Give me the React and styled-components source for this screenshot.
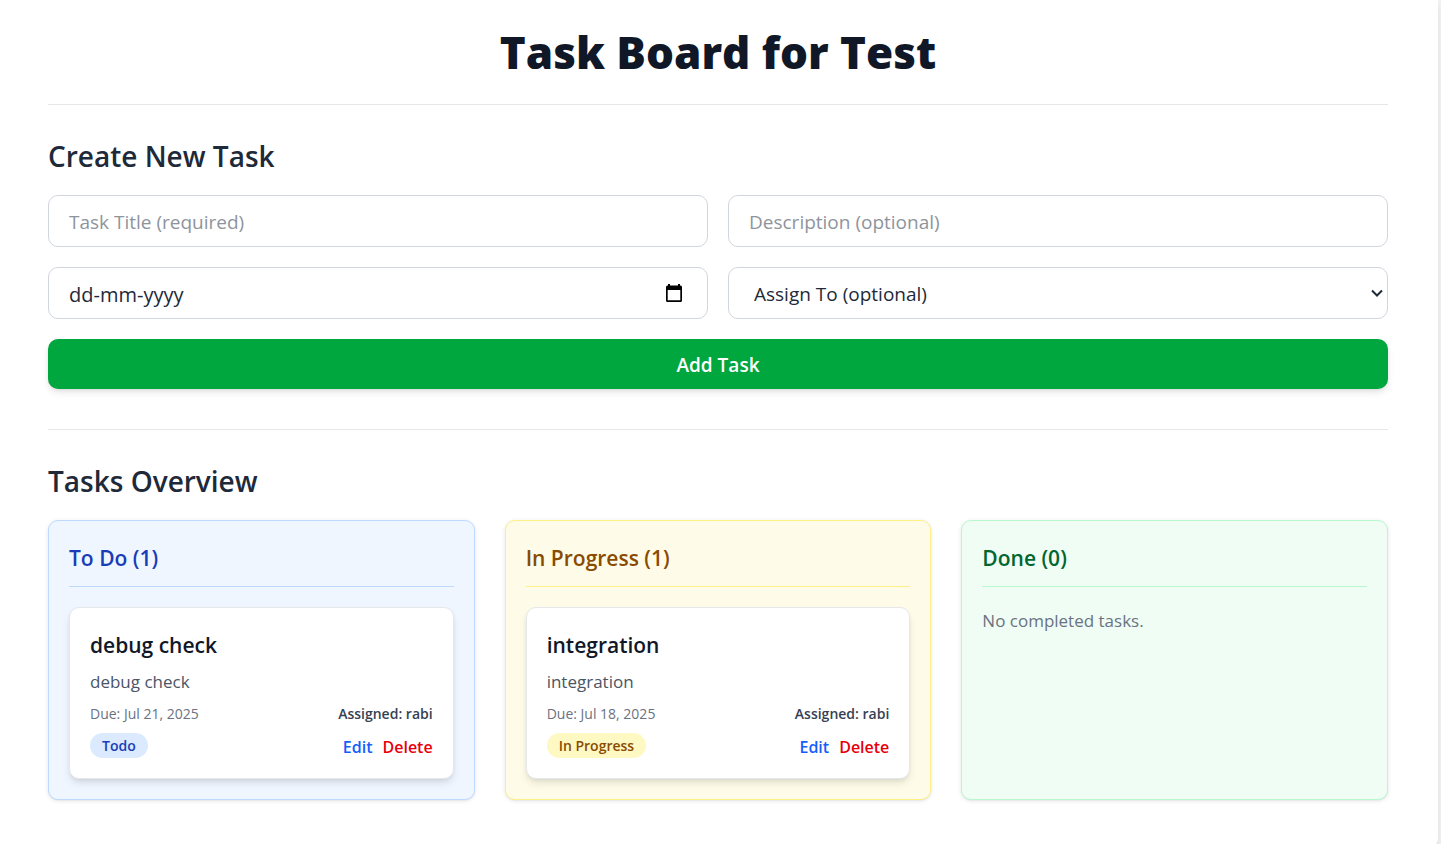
import React from "react";
import styled, { createGlobalStyle } from "styled-components";

const GlobalStyle = createGlobalStyle`
  *, *::before, *::after { box-sizing: border-box; }
  html, body { margin: 0; padding: 0; background: #f3f4f6; }
  body {
    font-family: "Open Sans", "Noto Sans", sans-serif;
    font-size: 19px;
    color: #1e2939;
  }
  h1, h2, h3, h4, p { margin: 0; }
  button, input, select { font: inherit; color: inherit; }
`;

const tones = {
  blue: { bg: "#eff6ff", line: "#bedbff", text: "#193cb8", badge: "#dbeafe" },
  yellow: { bg: "#fefce8", line: "#fff085", text: "#894b00", badge: "#fef9c2" },
  green: { bg: "#f0fdf4", line: "#b9f8cf", text: "#016630", badge: "#dcfce7" },
};

const Page = styled.div`
  height: 100vh;
  overflow: hidden;
`;

const Panel = styled.main`
  margin-right: 3px;
  padding: 27px 50px 48px 48px;
  background: #ffffff;
  border-radius: 0 0 10px 0;
  box-shadow: 0 4px 8px rgba(0, 0, 0, 0.1);
`;

const Header = styled.header`
  padding-bottom: 27px;
  border-bottom: 1px solid #e5e7eb;
  text-align: center;
`;

const Title = styled.h1`
  font-size: 44px;
  line-height: 50px;
  font-weight: 800;
  color: #101828;
`;

const Section = styled.section`
  padding-top: 32px;
`;

const SectionTitle = styled.h2`
  margin-bottom: 20px;
  font-size: 28px;
  line-height: 38px;
  font-weight: 600;
`;

const TaskForm = styled.form`
  display: grid;
  grid-template-columns: 1fr 1fr;
  gap: 20px;
  padding-bottom: 40px;
  border-bottom: 1px solid #e5e7eb;
`;

const Field = styled.div`
  display: flex;
  align-items: center;
  height: 52px;
  padding-right: ${(p) => p.$end || 20}px;
  border: 1px solid #d1d5dc;
  border-radius: 10px;
  background: #ffffff;
`;

const Input = styled.input`
  flex: 1;
  min-width: 0;
  height: 100%;
  padding: 2px 0 0 20px;
  border: 0;
  outline: 0;
  background: transparent;
  font-size: ${(p) => (p.$date ? 20 : 19)}px;
  &::placeholder {
    color: ${(p) => (p.$date ? "#1e2939" : "#8e949c")};
    opacity: 1;
  }
`;

const Select = styled.select`
  flex: 1;
  min-width: 0;
  height: 100%;
  padding: 2px 0 0 25px;
  border: 0;
  outline: 0;
  appearance: none;
  background: transparent;
`;

const IconButton = styled.button`
  display: flex;
  padding: 0;
  margin-right: 5px;
  border: 0;
  background: transparent;
  color: #000000;
  cursor: pointer;
`;

const SubmitButton = styled.button`
  grid-column: 1 / -1;
  height: 50px;
  padding: 2px 0 0;
  border: 0;
  border-radius: 10px;
  background: #00a63e;
  color: #ffffff;
  font-weight: 600;
  cursor: pointer;
  box-shadow: 0 4px 8px -1px rgba(0, 0, 0, 0.1), 0 2px 5px -2px rgba(0, 0, 0, 0.1);
`;

const Board = styled.div`
  display: grid;
  grid-template-columns: repeat(3, 1fr);
  gap: 30px;
`;

const Column = styled.section`
  padding: 20px;
  border: 1px solid ${(p) => tones[p.$tone].line};
  border-radius: 10px;
  background: ${(p) => tones[p.$tone].bg};
  box-shadow: 0 1px 4px rgba(0, 0, 0, 0.1), 0 1px 2px -1px rgba(0, 0, 0, 0.1);
`;

const ColumnTitle = styled.h3`
  margin-bottom: 20px;
  padding-bottom: 10px;
  border-bottom: 1px solid ${(p) => tones[p.$tone].line};
  font-size: 21px;
  line-height: 35px;
  font-weight: 600;
  color: ${(p) => tones[p.$tone].text};
`;

const Empty = styled.p`
  font-size: 17px;
  line-height: 28px;
  color: #6a7282;
`;

const Card = styled.article`
  display: flex;
  flex-direction: column;
  gap: 5px;
  padding: 20px;
  border: 1px solid #e5e7eb;
  border-radius: 10px;
  background: #ffffff;
  box-shadow: 0 5px 8px -1px rgba(0, 0, 0, 0.1), 0 2px 5px -2px rgba(0, 0, 0, 0.1);
`;

const CardTitle = styled.h4`
  font-size: 21px;
  line-height: 35px;
  font-weight: 600;
  color: #101828;
`;

const Description = styled.p`
  font-size: 17px;
  line-height: 28px;
  color: #4a5565;
`;

const Meta = styled.div`
  display: flex;
  justify-content: space-between;
  font-size: 14px;
  line-height: 25px;
  color: #6a7282;
`;

const Assignee = styled.span`
  font-weight: 600;
  color: #364153;
`;

const CardFooter = styled.div`
  display: flex;
  align-items: flex-end;
  justify-content: space-between;
  height: 27px;
`;

const Badge = styled.span`
  padding: 0 12px;
  border-radius: 13px;
  background: ${(p) => tones[p.$tone].badge};
  color: ${(p) => tones[p.$tone].text};
  font-size: 14px;
  line-height: 25px;
  font-weight: 600;
`;

const Actions = styled.div`
  display: flex;
  gap: 10px;
`;

const TextButton = styled.button`
  padding: 0;
  border: 0;
  background: transparent;
  color: ${(p) => (p.$danger ? "#e7000b" : "#155dfc")};
  font-size: 16px;
  line-height: 22px;
  font-weight: 600;
  cursor: pointer;
`;

const CalendarIcon = () => (
  <svg width="16" height="18" viewBox="0 0 16 18" aria-hidden="true">
    <path
      fill="currentColor"
      fillRule="evenodd"
      d="M2 0h2v1.5h8V0h2v1.5h.5A1.5 1.5 0 0 1 16 3v13.5a1.5 1.5 0 0 1-1.5 1.5h-13A1.5 1.5 0 0 1 0 16.500V3a1.5 1.5 0 0 1 1.500-1.500H2zM1.700 6v10.300h12.600V6z"
    />
  </svg>
);

const ChevronIcon = () => (
  <svg width="12" height="8" viewBox="0 0 12 8" aria-hidden="true">
    <path d="M1 1.500 6 6.500 11 1.500" fill="none" stroke="#1e2939" strokeWidth="2" />
  </svg>
);

const columns = [
  {
    title: "To Do",
    tone: "blue",
    tasks: [{ name: "debug check", due: "Jul 21, 2025", who: "rabi", status: "Todo" }],
  },
  {
    title: "In Progress",
    tone: "yellow",
    tasks: [{ name: "integration", due: "Jul 18, 2025", who: "rabi", status: "In Progress" }],
  },
  { title: "Done", tone: "green", tasks: [], empty: "No completed tasks." },
];

const TaskCard = ({ task, tone }) => (
  <Card>
    <CardTitle>{task.name}</CardTitle>
    <Description>{task.name}</Description>
    <Meta>
      <span>Due: {task.due}</span>
      <Assignee>Assigned: {task.who}</Assignee>
    </Meta>
    <CardFooter>
      <Badge $tone={tone}>{task.status}</Badge>
      <Actions>
        <TextButton type="button">Edit</TextButton>
        <TextButton type="button" $danger>Delete</TextButton>
      </Actions>
    </CardFooter>
  </Card>
);

export default function App() {
  return (
    <Page>
      <GlobalStyle />
      <Panel>
        <Header>
          <Title>Task Board for Test</Title>
        </Header>
        <Section>
          <SectionTitle>Create New Task</SectionTitle>
          <TaskForm onSubmit={(e) => e.preventDefault()}>
            <Field>
              <Input type="text" aria-label="Task Title" placeholder="Task Title (required)" />
            </Field>
            <Field>
              <Input type="text" aria-label="Description" placeholder="Description (optional)" />
            </Field>
            <Field>
              <Input type="text" aria-label="Due date" placeholder="dd-mm-yyyy" $date />
              <IconButton type="button" aria-label="Open calendar">
                <CalendarIcon />
              </IconButton>
            </Field>
            <Field $end={4}>
              <Select aria-label="Assign To" defaultValue="">
                <option value="">Assign To (optional)</option>
                <option value="rabi">rabi</option>
              </Select>
              <ChevronIcon />
            </Field>
            <SubmitButton type="submit">Add Task</SubmitButton>
          </TaskForm>
        </Section>
        <Section>
          <SectionTitle>Tasks Overview</SectionTitle>
          <Board>
            {columns.map((c) => (
              <Column key={c.title} $tone={c.tone}>
                <ColumnTitle $tone={c.tone}>
                  {c.title} ({c.tasks.length})
                </ColumnTitle>
                {c.tasks.map((t) => (
                  <TaskCard key={t.name} task={t} tone={c.tone} />
                ))}
                {c.empty && <Empty>{c.empty}</Empty>}
              </Column>
            ))}
          </Board>
        </Section>
      </Panel>
    </Page>
  );
}
